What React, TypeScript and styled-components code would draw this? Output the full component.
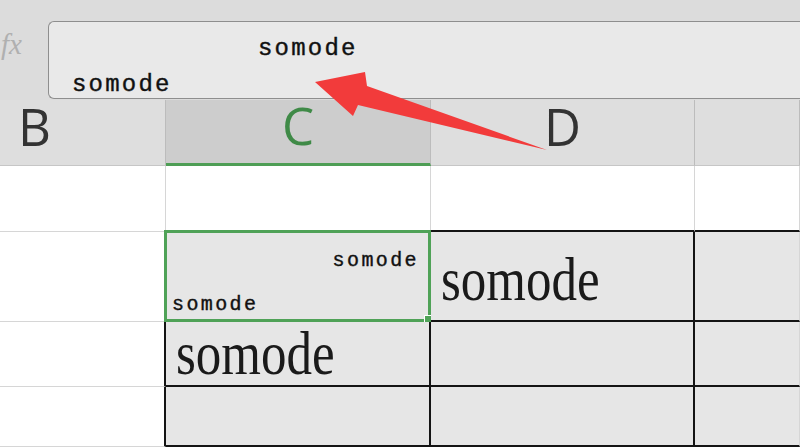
import React from "react";
import styled, { createGlobalStyle } from "styled-components";

const GlobalStyle = createGlobalStyle`
  html, body {
    margin: 0;
    padding: 0;
    background: #dcdcdc;
  }
  #root {
    width: 800px;
    height: 447px;
    overflow: hidden;
  }
`;

const Page = styled.div`
  position: relative;
  display: flex;
  flex-direction: column;
  width: 800px;
  height: 447px;
  overflow: hidden;
  background: #ffffff;
`;

const FormulaBar = styled.div`
  display: flex;
  align-items: stretch;
  height: 100px;
  padding-top: 21px;
  box-sizing: border-box;
  background: #dcdcdc;
`;

const FxLabel = styled.div`
  width: 48px;
  padding-top: 7px;
  padding-left: 1px;
  box-sizing: border-box;
  font-family: "Liberation Serif", serif;
  font-style: italic;
  font-size: 29px;
  color: #b0b0b0;
`;

const FormulaBox = styled.div`
  flex: 1;
  height: 78px;
  display: flex;
  flex-direction: column;
  padding: 9px 0 0 23px;
  box-sizing: border-box;
  background: #e9e9e9;
  border: 1px solid #8e8e8e;
  border-right: none;
  border-radius: 6px 0 0 6px;
`;

const MonoLine = styled.div<{ $indent?: number; $size: number; $gap: number }>`
  font-family: "Liberation Mono", monospace;
  font-size: ${(p) => p.$size}px;
  letter-spacing: ${(p) => p.$gap}px;
  line-height: 36px;
  color: #111111;
  -webkit-text-stroke: 0.4px #111111;
  padding-left: ${(p) => p.$indent ?? 0}px;
  white-space: nowrap;
`;

const Sheet = styled.div`
  flex: 1;
  display: grid;
  grid-template-columns: 166px 265px 264px 1fr;
  grid-template-rows: 66px 66px 90px 65px 1fr;
`;

const HeaderCell = styled.div<{ $selected?: boolean; $align?: string }>`
  display: flex;
  align-items: center;
  justify-content: ${(p) => p.$align ?? "center"};
  padding-left: ${(p) => (p.$align ? "18px" : "0")};
  padding-bottom: 14px;
  box-sizing: border-box;
  background: ${(p) => (p.$selected ? "#cdcdcd" : "#dedede")};
  border-right: 1px solid #bcbcbc;
  border-bottom: ${(p) => (p.$selected ? "3px solid #4e9e55" : "1px solid #c6c6c6")};
  font-family: "Open Sans", sans-serif;
  font-size: 51px;
  color: ${(p) => (p.$selected ? "#3f8a47" : "#333333")};
`;

const Cell = styled.div<{ $fill?: boolean; $right?: string; $bottom?: string }>`
  position: relative;
  display: flex;
  align-items: flex-end;
  box-sizing: border-box;
  background: ${(p) => (p.$fill ? "#e6e6e6" : "#ffffff")};
  border-right: ${(p) => p.$right ?? "1px solid #d6d6d6"};
  border-bottom: ${(p) => p.$bottom ?? "1px solid #d6d6d6"};
`;

const SplitContent = styled.div`
  flex: 1;
  align-self: stretch;
  display: flex;
  flex-direction: column;
  justify-content: space-between;
  padding: 15px 10px 1px 6px;
`;

const RightLine = styled(MonoLine)`
  text-align: right;
  line-height: 28px;
`;

const LeftLine = styled(MonoLine)`
  line-height: 28px;
`;

const BigText = styled.span<{ $bottom: number }>`
  display: block;
  margin: 0 0 ${(p) => p.$bottom}px 10px;
  font-family: "Liberation Serif", serif;
  font-size: 51px;
  line-height: 53px;
  color: #1a1a1a;
  transform: scaleY(1.22);
  transform-origin: 0 80%;
`;

const Selection = styled.div`
  position: absolute;
  left: -2px;
  top: -2px;
  right: -2px;
  bottom: -2px;
  border: 3px solid #4fa257;
  pointer-events: none;
`;

const FillHandle = styled.div`
  position: absolute;
  right: -5px;
  bottom: -5px;
  width: 7px;
  height: 7px;
  background: #4fa257;
  border: 1px solid #ffffff;
`;

const ArrowLayer = styled.svg`
  position: absolute;
  left: 0;
  top: 0;
  pointer-events: none;
`;

const black = "2px solid #141414";

export default function App() {
  return (
    <Page>
      <GlobalStyle />
      <FormulaBar>
        <FxLabel>fx</FxLabel>
        <FormulaBox>
          <MonoLine $size={24} $gap={2.2} $indent={186}>somode</MonoLine>
          <MonoLine $size={24} $gap={2.2}>somode</MonoLine>
        </FormulaBox>
      </FormulaBar>
      <Sheet>
        <HeaderCell $align="flex-start">B</HeaderCell>
        <HeaderCell $selected>C</HeaderCell>
        <HeaderCell>D</HeaderCell>
        <HeaderCell />

        <Cell />
        <Cell />
        <Cell $bottom={black} />
        <Cell $bottom={black} />

        <Cell $right={black} />
        <Cell $fill $right={black} $bottom={black}>
          <SplitContent>
            <RightLine $size={20} $gap={2.4}>somode</RightLine>
            <LeftLine $size={20} $gap={2.4}>somode</LeftLine>
          </SplitContent>
          <Selection>
            <FillHandle />
          </Selection>
        </Cell>
        <Cell $fill $right={black} $bottom={black}>
          <BigText $bottom={10}>somode</BigText>
        </Cell>
        <Cell $fill $bottom={black} />

        <Cell $right={black} />
        <Cell $fill $right={black} $bottom={black}>
          <BigText $bottom={1}>somode</BigText>
        </Cell>
        <Cell $fill $right={black} $bottom={black} />
        <Cell $fill $bottom={black} />

        <Cell $right={black} />
        <Cell $fill $right={black} $bottom={black} />
        <Cell $fill $right={black} $bottom={black} />
        <Cell $fill $bottom={black} />
      </Sheet>
      <ArrowLayer width="800" height="447" viewBox="0 0 800 447">
        <polygon
          points="315,82 365,72 367,86 547,150 358,105 353,116"
          fill="#f23b3b"
        />
      </ArrowLayer>
    </Page>
  );
}
